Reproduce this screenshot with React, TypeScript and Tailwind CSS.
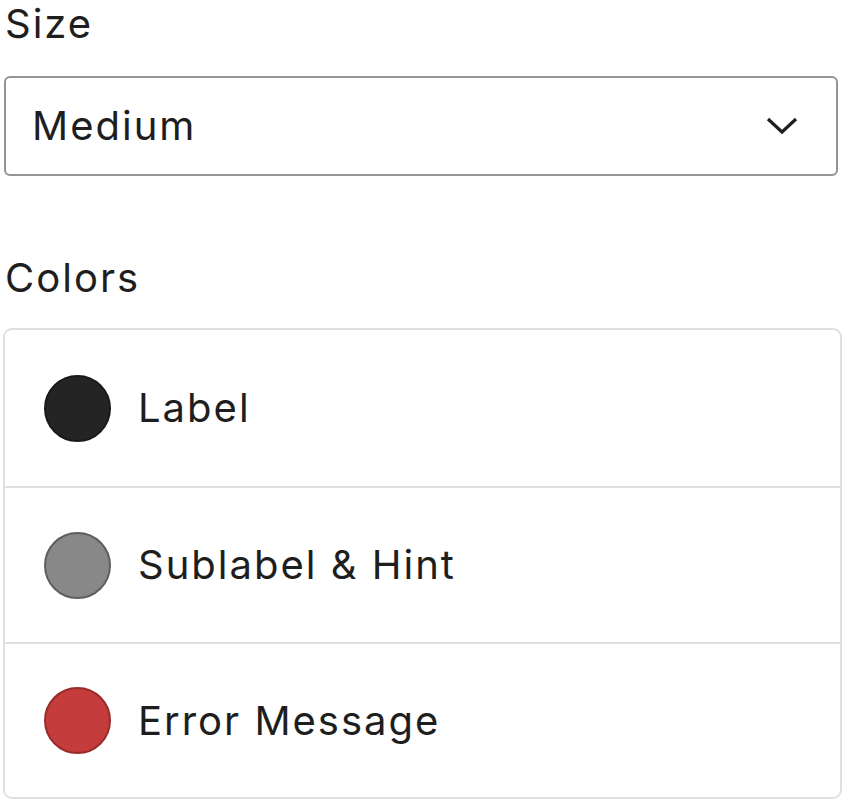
import React from "react";

const swatches = [
  { name: "Label", fill: "bg-[#242424]", ring: "border-[#1a1a1a]", h: "h-[158px] border-b-2" },
  { name: "Sublabel & Hint", fill: "bg-[#888888]", ring: "border-[#5e5e5e]", h: "h-[156px] border-b-2" },
  { name: "Error Message", fill: "bg-[#c43c3c]", ring: "border-[#992b2b]", h: "h-[153px]" },
];

const ColorRow = ({ name, fill, ring, h }: { name: string; fill: string; ring: string; h: string }) => {
  return (
    <div className={"flex items-center pl-[39px] border-[#e0e0e0] " + h}>
      <div className={"w-[67px] h-[67px] rounded-full border-2 " + fill + " " + ring} />
      <span className="ml-[27px] text-[40px] tracking-[0.05em] text-[#1e1e1e]">{name}</span>
    </div>
  );
};

export default function App() {
  return (
    <div
      className="w-[844px] h-[803px] bg-white pl-[3px] pr-[2px] text-[#1e1e1e]"
      style={{ fontFamily: "Inter, 'Noto Sans', sans-serif" }}
    >
      <div className="pt-[1px] pl-[2px] text-[40px] leading-[46px] tracking-[0.05em]">Size</div>
      <div className="mt-[29px] ml-[1px] mr-[4px] h-[100px] border-2 border-[#949494] rounded-[6px] flex items-center justify-between pl-[26px] pr-[38px]">
        <span className="text-[40px] tracking-[0.05em]">Medium</span>
        <svg width="32" height="18" viewBox="0 0 32 18" fill="none">
          <path d="M2 2 L16 15 L30 2" stroke="#1e1e1e" strokeWidth="3.2" />
        </svg>
      </div>
      <div className="mt-[79px] pl-[2px] text-[40px] leading-[46px] tracking-[0.05em]">Colors</div>
      <div className="mt-[27px] border-2 border-[#e0e0e0] rounded-[9px] overflow-hidden">
        {swatches.map((s) => (
          <ColorRow key={s.name} name={s.name} fill={s.fill} ring={s.ring} h={s.h} />
        ))}
      </div>
    </div>
  );
}
